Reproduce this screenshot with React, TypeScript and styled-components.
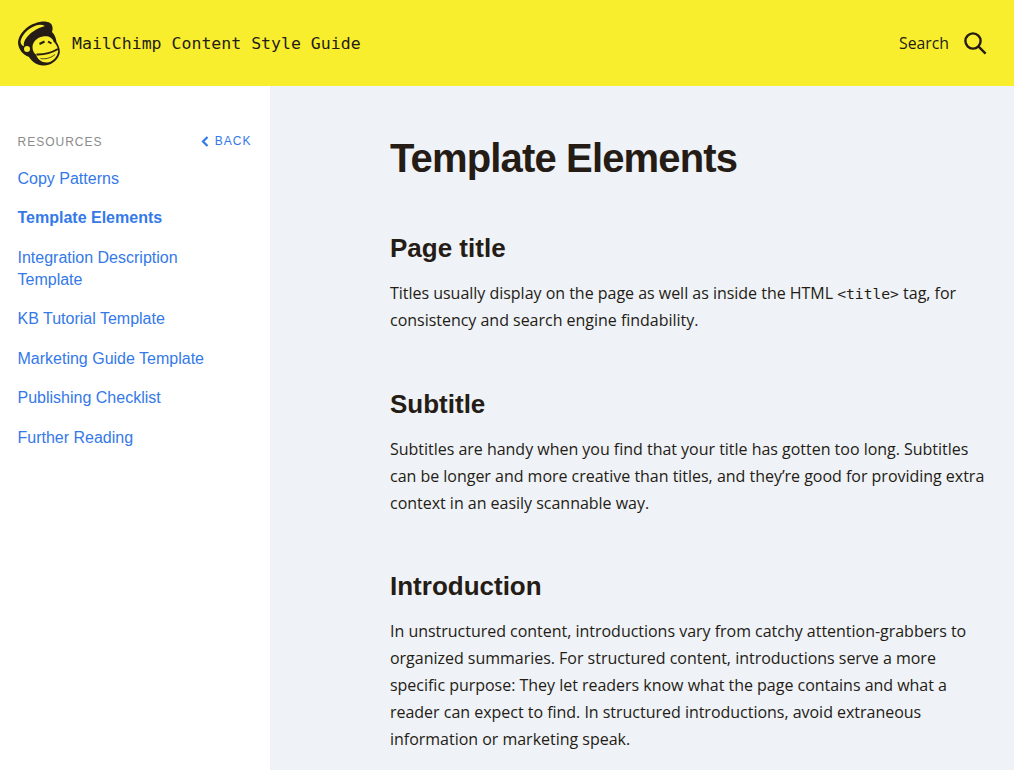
import * as React from 'react'
import styled, { createGlobalStyle } from 'styled-components'

const GlobalStyle = createGlobalStyle`
  html, body {
    margin: 0;
    padding: 0;
    height: 770px;
    overflow: hidden;
    background: #fff;
  }
`

const Page = styled.div`
  display: flex;
  flex-direction: column;
  height: 770px;
  overflow: hidden;
`

const Header = styled.header`
  flex: none;
  height: 86px;
  background: #f9ee2e;
  display: flex;
  align-items: center;
  justify-content: space-between;
  padding: 0 27px 0 17px;
`

const Brand = styled.div`
  display: flex;
  align-items: center;
  gap: 12px;
`

const BrandName = styled.span`
  font-family: 'DejaVu Sans Mono', monospace;
  font-size: 16.55px;
  color: #241c15;
`

const SearchBox = styled.div`
  display: flex;
  align-items: center;
  gap: 15px;
`

const SearchLabel = styled.span`
  font-family: 'Open Sans', sans-serif;
  font-size: 15.8px;
  color: #241c15;
`

const Body = styled.div`
  flex: 1;
  display: flex;
  min-height: 0;
`

const Sidebar = styled.nav`
  flex: none;
  width: 269.5px;
  box-sizing: border-box;
  padding: 48px 18px 0 17.5px;
  background: #fff;
  font-family: 'Liberation Sans', Arial, sans-serif;
`

const SideHead = styled.div`
  display: flex;
  justify-content: space-between;
  align-items: center;
  height: 16px;
  margin-bottom: 17.9px;
`

const SideTitle = styled.span`
  font-size: 12px;
  letter-spacing: 1px;
  color: #8b8b8b;
`

const BackLink = styled.a`
  display: flex;
  align-items: center;
  gap: 6px;
  font-size: 12px;
  letter-spacing: 1px;
  color: #3479e8;
  margin-top: -2px;
`

const NavList = styled.ul`
  list-style: none;
  margin: 0;
  padding: 0;
  display: flex;
  flex-direction: column;
  gap: 17.45px;
`

const NavItem = styled.li<{ $active?: boolean }>`
  font-size: 16px;
  line-height: 22px;
  max-width: 200px;
  color: #3479e8;
  font-weight: ${p => (p.$active ? 700 : 400)};
`

const Main = styled.main`
  flex: 1;
  min-width: 0;
  box-sizing: border-box;
  background: #eff2f7;
  padding: 47px 0 0 120.5px;
  color: #241c15;
`

const Title = styled.h1`
  margin: 0 0 48px;
  font-family: 'Liberation Sans', Arial, sans-serif;
  font-size: 40px;
  line-height: 50px;
  font-weight: 700;
  letter-spacing: -0.85px;
`

const SectionTitle = styled.h2`
  margin: 0 0 15px;
  font-family: 'Liberation Sans', Arial, sans-serif;
  font-size: 26px;
  line-height: 34px;
  font-weight: 700;
`

const Paragraph = styled.p`
  margin: 0 0 52.5px;
  font-family: 'Open Sans', sans-serif;
  font-size: 16px;
  line-height: 27px;
  letter-spacing: -0.02px;
  white-space: nowrap;
`

const Code = styled.code`
  font-family: 'DejaVu Sans Mono', monospace;
  font-size: 14.7px;
`

const Logo = () => (
  <svg width="43" height="45" viewBox="0 0 43 45">
    <path
      d="M1 21C2 13 9 5 19 2C24 0 30 0 33 2C36 4 36 8 35 11C38 14 39 17 39.5 21C42 25 43.5 29 42.5 33C40 41 32 45 26 44.5C20 44 15 41 12 36C6 34 1 28 1 21Z"
      fill="#241c15"
    />
    <path d="M3.5 20.5C5 14 11 7 19 4.5C22 3.5 25 3.5 28 5C20 7 12 12 8 19C7 21 6.5 23 7 25.5C5 24.5 3.5 23 3.5 20.5Z" fill="#f9ee2e" />
    <path
      d="M15.5 26C15.5 21 20 16.5 26 15.5C31 14.5 35.5 16.5 36.5 20.5C39 23 41 26 41.2 30C40.5 36.5 35.5 41 30 41.5C25 41.8 20.5 38.5 19 33.5C17 32.5 15.5 29 15.5 26Z"
      fill="#f9ee2e"
    />
    <circle cx="10" cy="28" r="3.8" fill="#f9ee2e" stroke="#241c15" strokeWidth="1.6" />
    <path d="M22.5 23L27.5 20.5M31 20.5L34.5 22.5" stroke="#241c15" strokeWidth="2" fill="none" />
    <path d="M19.5 33.5C27 33.8 35 31.5 41 28" stroke="#241c15" strokeWidth="2" fill="none" />
    <path d="M23.5 37.5C28 38.5 34 37 38 33.5" stroke="#241c15" strokeWidth="0.8" fill="none" />
  </svg>
)

const SearchIcon = () => (
  <svg width="23" height="23" viewBox="0 0 23 23" fill="none" stroke="#241c15" strokeWidth="2.4">
    <circle cx="9" cy="9" r="7.6" />
    <path d="M14.6 14.6L21.6 21.6" />
  </svg>
)

const BackIcon = () => (
  <svg width="8" height="11" viewBox="0 0 8 11" fill="none" stroke="#3479e8" strokeWidth="2.2">
    <path d="M6.5 1L2 5.5L6.5 10" />
  </svg>
)

const links = [
  'Copy Patterns',
  'Template Elements',
  'Integration Description Template',
  'KB Tutorial Template',
  'Marketing Guide Template',
  'Publishing Checklist',
  'Further Reading',
]

const App = () => (
  <Page>
    <GlobalStyle />
    <Header>
      <Brand>
        <Logo />
        <BrandName>MailChimp Content Style Guide</BrandName>
      </Brand>
      <SearchBox>
        <SearchLabel>Search</SearchLabel>
        <SearchIcon />
      </SearchBox>
    </Header>
    <Body>
      <Sidebar>
        <SideHead>
          <SideTitle>RESOURCES</SideTitle>
          <BackLink>
            <BackIcon />
            BACK
          </BackLink>
        </SideHead>
        <NavList>
          {links.map(link => (
            <NavItem key={link} $active={link === 'Template Elements'}>
              {link}
            </NavItem>
          ))}
        </NavList>
      </Sidebar>
      <Main>
        <Title>Template Elements</Title>
        <SectionTitle>Page title</SectionTitle>
        <Paragraph>
          Titles usually display on the page as well as inside the HTML <Code>&lt;title&gt;</Code> tag, for
          <br />
          consistency and search engine findability.
        </Paragraph>
        <SectionTitle>Subtitle</SectionTitle>
        <Paragraph>
          Subtitles are handy when you find that your title has gotten too long. Subtitles
          <br />
          can be longer and more creative than titles, and they’re good for providing extra
          <br />
          context in an easily scannable way.
        </Paragraph>
        <SectionTitle>Introduction</SectionTitle>
        <Paragraph>
          In unstructured content, introductions vary from catchy attention-grabbers to
          <br />
          organized summaries. For structured content, introductions serve a more
          <br />
          specific purpose: They let readers know what the page contains and what a
          <br />
          reader can expect to find. In structured introductions, avoid extraneous
          <br />
          information or marketing speak.
        </Paragraph>
      </Main>
    </Body>
  </Page>
)

export default App
